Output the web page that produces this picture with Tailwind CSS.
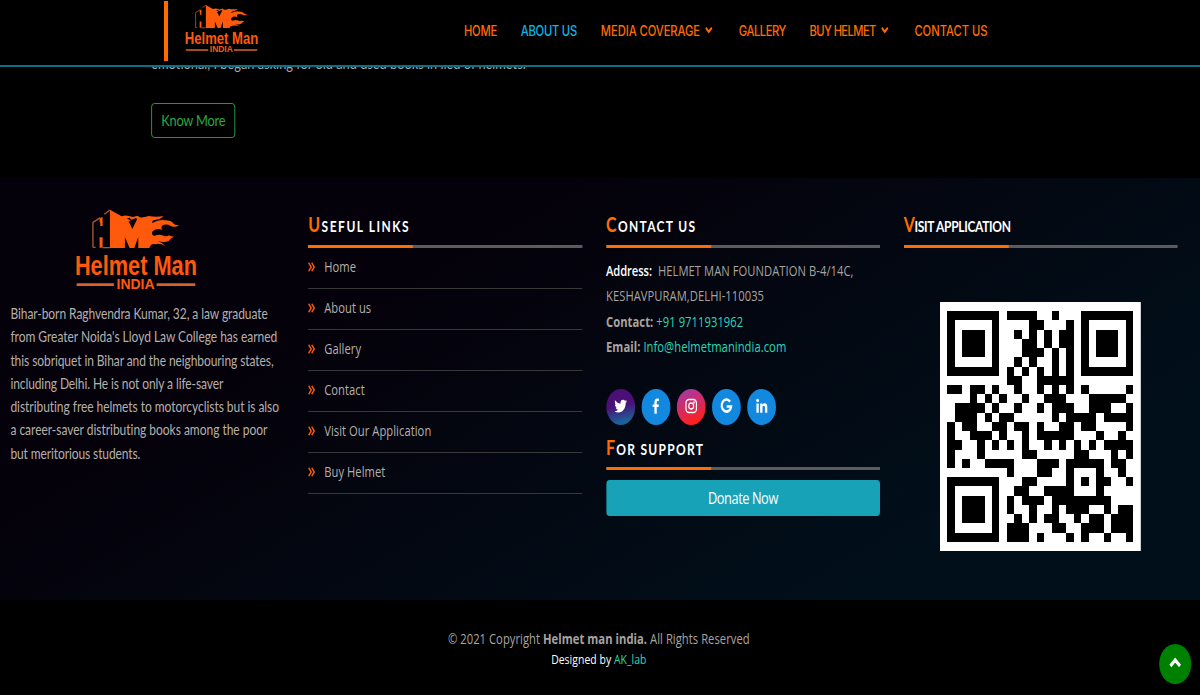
<!DOCTYPE html>
<html lang="en">
<head>
<meta charset="utf-8">
<title>Helmet Man India</title>
<script src="https://cdn.jsdelivr.net/npm/@tailwindcss/browser@4"></script>
</head>
<body class="bg-black">
<svg class="hidden">
  <symbol id="logo" viewBox="220 55 375 250" preserveAspectRatio="none">
    <g fill="#ff5a0c">
      <path d="M329 60 L364 80 Q374 76 386 79 L398 82 L412 78 L418 83 Q432 84 445 79 Q470 84 489 79 Q482 90 463 91 Q454 93 456 100 Q476 88 495 92 Q512 92 520 102 Q527 108 537 107 Q524 115 512 109 Q500 102 488 106 Q480 112 486 121 Q470 114 458 124 Q450 134 462 139 Q476 132 490 138 Q500 142 506 137 Q515 142 523 140 Q514 144 505 154 Q490 161 472 153 Q488 160 494 168 Q478 160 466 164 Q452 160 447 175 L414 175 L414 142 L402 175 L388 175 L374 142 L374 175 L329 175 Z"/>
      <path d="M298 86 L307 82 L307 109 L300 109 L300 98 L298 98 Z M298 143 L307 143 L307 174 L298 174 Z"/>
    </g>
    <g fill="none" stroke="#a85a34" stroke-width="4"><path d="M278 173 V98 L300 84 M312 74 L329 61 M278 173 H286 M307 174 H329"/></g>
    <path d="M380 86 L388 84 L394 90 L406 85 L411 88 L396 118 L389 102 L384 96 L392 94 Z" fill="#06030b"/>
    <g fill="#ff5a0c" font-family="Liberation Sans" font-weight="700">
      <text x="224" y="255" font-size="83" textLength="366" lengthAdjust="spacingAndGlyphs">Helmet Man</text>
      <text x="349" y="297" font-size="44" textLength="114" lengthAdjust="spacingAndGlyphs">INDIA</text>
    </g>
    <path d="M229 281h112v8h-112z M469 281h116v8h-116z" fill="#d9602a"/>
  </symbol>
  <symbol id="chev" viewBox="0 0 10 8"><path d="M1.2 1.8 L5 5.8 L8.8 1.8" fill="none" stroke="currentColor" stroke-width="2.2"/></symbol>
  <symbol id="dbl" viewBox="0 0 9 10"><path d="M.8 .8 L4 5 L.8 9.2 M4.6 .8 L7.8 5 L4.6 9.2" fill="none" stroke="currentColor" stroke-width="1.7"/></symbol>
</svg>

<div class="h-[695px] w-[1200px] overflow-hidden">
<div class="relative flex h-[695px] w-[1500px] origin-top-left scale-x-80 flex-col overflow-hidden font-['Open_Sans',sans-serif]">

  <header class="relative z-10 flex h-[67px] shrink-0 border-b-2 border-[#0b6f85] bg-black pl-[205px]">
    <div class="mt-px h-[60px] w-[5px] bg-[#ff6d00]"></div>
    <svg class="mt-1 ml-[20px] h-[50px] w-[94px]"><use href="#logo"/></svg>
    <nav class="ml-[256px] flex h-[60px] items-center font-['Inter',sans-serif] text-[14px] font-medium whitespace-nowrap text-[#ff6d00]">
      <a class="w-[71px] tracking-[-0.3px]">HOME</a>
      <a class="w-[100px] tracking-[-0.3px] text-[#0bb5e8]">ABOUT US</a>
      <a class="flex w-[172.5px] items-center gap-1.5 tracking-[-0.07px]">MEDIA COVERAGE<svg class="h-2 w-[10px]"><use href="#chev"/></svg></a>
      <a class="w-[88.5px] tracking-[-0.57px]">GALLERY</a>
      <a class="flex w-[131px] items-center gap-1.5 tracking-[-0.75px]">BUY HELMET<svg class="h-2 w-[10px]"><use href="#chev"/></svg></a>
      <a>CONTACT US</a>
    </nav>
  </header>

  <section class="-mt-[16px] h-[127px] shrink-0 pl-[189px] font-['Lato',sans-serif]">
    <p class="h-[23px] text-[16px] leading-[23px] whitespace-nowrap text-[#aaa]">emotional, I began asking for old and used books in lieu of helmets.</p>
    <a class="mt-[29px] flex h-[35px] w-[105px] items-center justify-center rounded border border-[#28a745] pb-px text-[16px] tracking-[-0.27px] whitespace-nowrap text-[#28a745]">Know More</a>
  </section>

  <footer class="grid h-[422px] shrink-0 grid-cols-4 gap-[30px] bg-linear-[155deg] from-[#05010a] from-30% to-[#010f1a] to-80% pr-[28px] pl-[13px] whitespace-nowrap">
    <div>
      <svg class="mt-[30px] ml-[79px] h-[83.3px] w-[156.25px]"><use href="#logo"/></svg>
      <p class="mt-[10.7px] font-['Lato',sans-serif] text-[15px] leading-[23.3px] text-[#b4b0ac]">
        <span class="tracking-[-0.09px]">Bihar-born Raghvendra Kumar, 32, a law graduate</span><br>
        <span class="tracking-[-0.03px]">from Greater Noida's Lloyd Law College has earned</span><br>
        <span class="tracking-[-0.1px]">this sobriquet in Bihar and the neighbouring states,</span><br>
        <span class="tracking-[-0.12px]">including Delhi. He is not only a life-saver</span><br>
        <span class="tracking-[-0.06px]">distributing free helmets to motorcyclists but is also</span><br>
        <span class="tracking-[-0.03px]">a career-saver distributing books among the poor</span><br>
        <span class="tracking-[-0.13px]">but meritorious students.</span>
      </p>
    </div>

    <div>
      <h4 class="h-[66.5px] pt-[34px] font-['Lato',sans-serif] text-[15px] leading-[24px] font-bold tracking-[1.9px] text-white"><span class="text-[20px] text-[#ff6d00]">U</span>SEFUL LINKS</h4>
      <div class="h-[3.5px] bg-[#5c5c5c]"><div class="h-full w-[131px] bg-[#ff6d00]"></div></div>
      <ul class="text-[14px] tracking-[0.06px] text-[#b4b0ac]">
        <li class="flex h-[41px] items-center gap-[11px] border-b border-[#383838] pb-[3px]"><svg class="h-[10px] w-[9px] text-[#ff5a0c]"><use href="#dbl"/></svg>Home</li>
        <li class="flex h-[41px] items-center gap-[11px] border-b border-[#383838] pb-[3px]"><svg class="h-[10px] w-[9px] text-[#ff5a0c]"><use href="#dbl"/></svg>About us</li>
        <li class="flex h-[41px] items-center gap-[11px] border-b border-[#383838] pb-[3px]"><svg class="h-[10px] w-[9px] text-[#ff5a0c]"><use href="#dbl"/></svg>Gallery</li>
        <li class="flex h-[41px] items-center gap-[11px] border-b border-[#383838] pb-[3px]"><svg class="h-[10px] w-[9px] text-[#ff5a0c]"><use href="#dbl"/></svg>Contact</li>
        <li class="flex h-[41px] items-center gap-[11px] border-b border-[#383838] pb-[3px]"><svg class="h-[10px] w-[9px] text-[#ff5a0c]"><use href="#dbl"/></svg>Visit Our Application</li>
        <li class="flex h-[41px] items-center gap-[11px] border-b border-[#383838] pb-[3px]"><svg class="h-[10px] w-[9px] text-[#ff5a0c]"><use href="#dbl"/></svg>Buy Helmet</li>
      </ul>
    </div>

    <div>
      <h4 class="h-[66.5px] pt-[34px] font-['Lato',sans-serif] text-[15px] leading-[24px] font-bold tracking-[1.65px] text-white"><span class="text-[20px] text-[#ff6d00]">C</span>ONTACT US</h4>
      <div class="h-[3.5px] bg-[#5c5c5c]"><div class="h-full w-[131px] bg-[#ff6d00]"></div></div>
      <p class="mt-[10px] text-[14px] leading-[25.4px] tracking-[0.07px] text-[#a8a4a0]">
        <span class="font-semibold tracking-[-0.1px] text-white">Address:</span>&nbsp; HELMET MAN FOUNDATION B-4/14C,<br>
        KESHAVPURAM,DELHI-110035<br>
        <span class="font-bold">Contact:</span> <span class="text-[#2bd6b8]">+91 9711931962</span><br>
        <span class="font-bold">Email:</span> <span class="text-[#2bd6b8]">Info@helmetmanindia.com</span>
      </p>
      <div class="mt-[29.5px] flex gap-2 text-white">
        <a class="flex size-9 items-center justify-center rounded-full bg-linear-[170deg] from-[#4b0f75] from-45% to-[#1b6096] to-85%"><svg class="mb-0.5 size-4" viewBox="0 0 24 24" fill="currentColor"><path d="M23.6 4.9c-.9.4-1.8.6-2.8.8 1-.6 1.8-1.6 2.1-2.7-.9.6-2 1-3.1 1.2a4.85 4.85 0 0 0-8.3 4.4C7.5 8.4 3.9 6.5 1.5 3.5a4.85 4.85 0 0 0 1.5 6.5c-.8 0-1.5-.2-2.2-.6v.1c0 2.3 1.7 4.3 3.9 4.7-.7.2-1.5.2-2.2.1.6 1.9 2.4 3.3 4.5 3.4A9.8 9.8 0 0 1 0 19.7 13.8 13.8 0 0 0 7.5 21.9c9 0 14-7.5 13.7-14.5 1-.7 1.8-1.5 2.4-2.5z"/></svg></a>
        <a class="flex size-9 items-center justify-center rounded-full bg-[#1288df]"><svg class="mb-0.5 size-4" viewBox="0 0 24 24" fill="currentColor"><path d="M9 23.5V13.5H5.7V9.6H9V6.7C9 3 11 .8 14.6.8c1.3 0 2.8.2 2.8.2v3.5h-2c-1.5 0-2 .9-2 2v3.1h4l-.6 3.900h-3.400v10z"/></svg></a>
        <a class="flex size-9 items-center justify-center rounded-full bg-linear-[160deg] from-[#9c3bb3] to-[#ff1f1f] to-85%"><svg class="mb-0.5 size-4" viewBox="0 0 24 24" fill="none" stroke="currentColor" stroke-width="2.3"><rect x="2.2" y="2.2" width="19.6" height="19.6" rx="5.5"/><circle cx="12" cy="12" r="4.6"/><circle cx="17.5" cy="6.5" r=".6"/></svg></a>
        <a class="flex size-9 items-center justify-center rounded-full bg-[#1288df]"><svg class="mb-0.5 size-4" viewBox="0 0 24 24" fill="none" stroke="currentColor" stroke-width="4"><path d="M19 5.5A9 9 0 1 0 21 12.7H12.5"/></svg></a>
        <a class="flex size-9 items-center justify-center rounded-full bg-[#1288df]"><svg class="mb-0.5 size-4" viewBox="0 0 24 24" fill="currentColor"><circle cx="4.5" cy="3.8" r="2.6"/><path d="M2.3 8.3h4.4V22H2.3z M9.3 8.3h4.2v1.9c.8-1.4 2.3-2.3 4.2-2.3 4.2 0 5 2.7 5 6.4V22h-4.4v-6.8c0-1.7-.1-3.5-2.2-3.5s-2.5 1.6-2.5 3.4V22H9.3z"/></svg></a>
      </div>
      <h4 class="h-[41.5px] pt-[9.5px] font-['Lato',sans-serif] text-[15px] leading-[24px] font-bold tracking-[1.6px] text-white"><span class="text-[20px] text-[#ff6d00]">F</span>OR SUPPORT</h4>
      <div class="h-[3px] bg-[#5c5c5c]"><div class="h-full w-[131px] bg-[#ff6d00]"></div></div>
      <a class="mt-[10px] flex h-9 items-center justify-center rounded bg-[#17a2b8] text-[16px] tracking-[-0.54px] text-white">Donate Now</a>
    </div>

    <div>
      <h4 class="h-[66.5px] pt-[34px] font-['Lato',sans-serif] text-[15px] leading-[24px] font-bold tracking-[-0.4px] text-white"><span class="text-[20px] text-[#ff6d00]">V</span>ISIT APPLICATION</h4>
      <div class="h-[3.5px] bg-[#5c5c5c]"><div class="h-full w-[131px] bg-[#ff6d00]"></div></div>
      <svg id="qr" class="mt-[54px] ml-[45px] h-[249px] w-[251px] bg-white" viewBox="-1 -1 27 27" preserveAspectRatio="none" shape-rendering="crispEdges">
        <path fill="none" stroke="#000" d="M.5 .5h6v6h-6z M18.5 .5h6v6h-6z M.5 18.5h6v6h-6z"/>
        <path d="M2 2h3v3h-3z M20 2h3v3h-3z M2 20h3v3h-3z"/>
      </svg>
    </div>
  </footer>

  <div class="flex flex-1 flex-col items-center pt-[29px] text-[14px] leading-5 tracking-[0.06px] whitespace-nowrap text-[#a8a4a0]">
    <p class="-ml-[3px]">© 2021 Copyright <span class="font-bold">Helmet man india.</span> All Rights Reserved</p>
    <p class="-ml-[3px] text-[13px] text-white">Designed by <span class="text-[#2bd6b8]">AK_lab</span></p>
  </div>

  <a class="absolute top-[644px] left-[1449px] flex size-10 items-center justify-center rounded-full bg-[#008000] text-white"><svg class="mb-1 h-[11px] w-[16px]" viewBox="0 0 16 11"><path d="M2 9 L8 3 L14 9" fill="none" stroke="currentColor" stroke-width="3.6"/></svg></a>
</div>
</div>

<script>
  // Dark modules of the QR code, one entry per row, as column ranges
  const rows = ["8-11,14","11,12,16","9,11,13,15,16","10,11,13,15,16","10-12,14,16","9,11,14,16","8,10,12,14,16","8,9,12-16",
    "0,1,3,4,6,9,12,14,16,18,24","3,5,7,10,13-15,19-23","1-4,6,9,12,14-16,19-21,24","1-3,5,7,8,14,16-19,21-24",
    "0,2,3,6,7,9,10,12,15,16,18,19,24","0,3-5,7,10,12-16,20,23","0,1,4,6,8,10,13,15,17,19,21-24","0,4,10,11,17,18,22,24",
    "0,2,5-8,12-14,16-20,22,23","8,12,13,16,20,23","10,11,16,18,20,21,24","9,10,13-16,20","8,10-12,14-21",
    "8,11,14,16-18,21,23,24","9,11,13,14,17,19,20,22-24","8-10,14,15,18-20,22-24","8-10,12,16,18,21,24"];
  const d = rows.map((r, y) => r.split(",").map(p => { const [a, b = a] = p.split("-").map(Number); return `M${a} ${y}h${b - a + 1}v1h-${b - a + 1}z`; }).join("")).join("");
  const path = document.createElementNS("http://www.w3.org/2000/svg", "path");
  path.setAttribute("d", d);
  document.getElementById("qr").append(path);
</script>
</body>
</html>
